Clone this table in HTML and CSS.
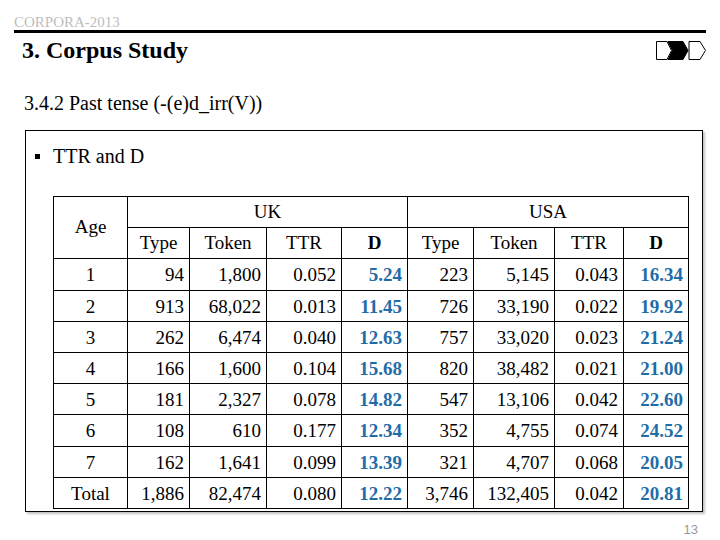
FILE: index.html
```html
<!DOCTYPE html>
<html>
<head>
<meta charset="utf-8">
<link rel="stylesheet" href="styles.css">
</head>
<body>
<div class="slide">
  <header class="top"><span class="conf">CORPORA-2013</span></header>
  <div class="title-row">
    <h1 class="title">3. Corpus Study</h1>
    <svg class="nav" width="51" height="19" viewBox="0 0 51 19">
      <path d="M0.5,0.5 H11 L15.5,9.5 L11,18.5 H0.5 Z" fill="#fff" stroke="#000" stroke-width="1"/>
      <path d="M12,0.5 H27 L32,9.5 L27,18.5 H12 L16.5,9.5 Z" fill="#000" stroke="#000" stroke-width="1"/>
      <path d="M33,0.5 H44 L49.5,9.5 L44,18.5 H33 Z" fill="#fff" stroke="#000" stroke-width="1"/>
    </svg>
  </div>
  <h2 class="subtitle">3.4.2 Past tense (-(e)d_irr(V))</h2>
  <div class="box">
    <div class="bullet"><span class="sq"></span>TTR and D</div>
    <table class="data">
      <colgroup>
        <col style="width:74px"><col style="width:62px"><col style="width:77px"><col style="width:75px"><col style="width:66px">
        <col style="width:66px"><col style="width:81px"><col style="width:69px"><col style="width:65px">
      </colgroup>
      <tr>
        <th rowspan="2" class="age-h">Age</th>
        <th colspan="4">UK</th>
        <th colspan="4">USA</th>
      </tr>
      <tr>
        <th>Type</th><th>Token</th><th>TTR</th><th class="dh">D</th>
        <th>Type</th><th>Token</th><th>TTR</th><th class="dh">D</th>
      </tr>
      <tr><td class="c">1</td><td>94</td><td>1,800</td><td>0.052</td><td class="d">5.24</td><td>223</td><td>5,145</td><td>0.043</td><td class="d">16.34</td></tr>
      <tr><td class="c">2</td><td>913</td><td>68,022</td><td>0.013</td><td class="d">11.45</td><td>726</td><td>33,190</td><td>0.022</td><td class="d">19.92</td></tr>
      <tr><td class="c">3</td><td>262</td><td>6,474</td><td>0.040</td><td class="d">12.63</td><td>757</td><td>33,020</td><td>0.023</td><td class="d">21.24</td></tr>
      <tr><td class="c">4</td><td>166</td><td>1,600</td><td>0.104</td><td class="d">15.68</td><td>820</td><td>38,482</td><td>0.021</td><td class="d">21.00</td></tr>
      <tr><td class="c">5</td><td>181</td><td>2,327</td><td>0.078</td><td class="d">14.82</td><td>547</td><td>13,106</td><td>0.042</td><td class="d">22.60</td></tr>
      <tr><td class="c">6</td><td>108</td><td>610</td><td>0.177</td><td class="d">12.34</td><td>352</td><td>4,755</td><td>0.074</td><td class="d">24.52</td></tr>
      <tr><td class="c">7</td><td>162</td><td>1,641</td><td>0.099</td><td class="d">13.39</td><td>321</td><td>4,707</td><td>0.068</td><td class="d">20.05</td></tr>
      <tr><td class="c">Total</td><td>1,886</td><td>82,474</td><td>0.080</td><td class="d">12.22</td><td>3,746</td><td>132,405</td><td>0.042</td><td class="d">20.81</td></tr>
    </table>
  </div>
  <footer class="pnum">13</footer>
</div>
</body>
</html>
```
FILE: styles.css
```css
html, body {
  margin: 0;
  padding: 0;
  background: #fff;
}
.slide {
  width: 720px;
  height: 540px;
  overflow: hidden;
  font-family: "Liberation Serif", "Times New Roman", serif;
  color: #000;
}
.top {
  margin: 0 14px;
  height: 30px;
  display: flex;
  align-items: flex-end;
  border-bottom: 3px solid #000;
}
.conf {
  font-size: 15px;
  line-height: 15px;
  color: #bdbdbd;
}
.title-row {
  display: flex;
  justify-content: space-between;
  align-items: flex-start;
}
.title {
  margin: 5px 0 0 22px;
  font-size: 24px;
  line-height: 24px;
  font-weight: bold;
}
.nav {
  display: block;
  margin: 8px 13px 0 0;
}
.subtitle {
  margin: 31px 0 0 24px;
  font-size: 20px;
  line-height: 20px;
  font-weight: normal;
}
.box {
  margin: 17px 0 0 25px;
  width: 676px;
  height: 380px;
  border: 1px solid #000;
  box-shadow: 2px 2px 2px #c4c4c4;
}
.bullet {
  margin-top: 15px;
  font-size: 20px;
  line-height: 20px;
  display: flex;
  align-items: center;
}
.sq {
  display: inline-block;
  width: 5px;
  height: 5px;
  background: #000;
  margin: 0 13px 0 9px;
}
.data {
  margin: 30px 0 0 27px;
  width: 635px;
  border-collapse: collapse;
  table-layout: fixed;
  font-size: 19px;
}
.data tr {
  height: 31.2px;
}
.data th, .data td {
  border: 1px solid #000;
  padding: 0 5px 0 0;
  line-height: 20px;
  white-space: nowrap;
}
.data th {
  font-weight: normal;
  text-align: center;
  padding: 0;
}
.data th.dh {
  font-weight: bold;
}
.data th.age-h {
  vertical-align: middle;
  padding-bottom: 2px;
}
.data td {
  text-align: right;
  padding-top: 2px;
}
.data td.c {
  text-align: center;
  padding-right: 0;
}
.data td.d {
  color: #1f6da8;
  font-weight: bold;
}
.pnum {
  display: flex;
  justify-content: flex-end;
  margin-top: 11px;
  padding-right: 22px;
  font-family: "Liberation Sans", Arial, sans-serif;
  font-size: 13px;
  line-height: 13px;
  color: #9a9a9a;
}
```
